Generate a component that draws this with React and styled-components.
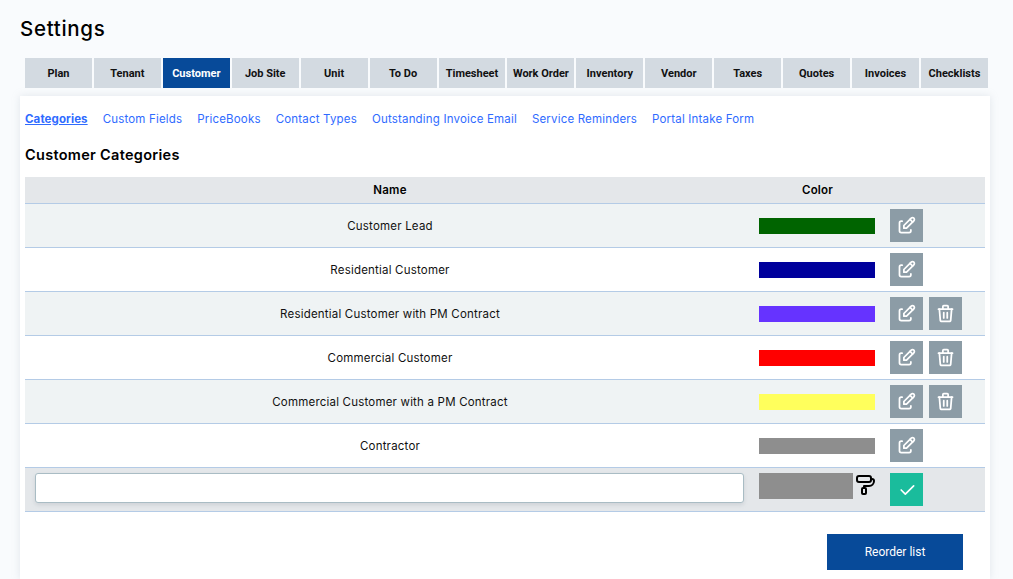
import React from 'react';
import styled, { createGlobalStyle } from 'styled-components';
import { TbEdit, TbTrash, TbCheck, TbPaint } from 'react-icons/tb';

const GlobalStyle = createGlobalStyle`
  html, body {
    margin: 0;
    height: 100%;
    overflow: hidden;
    background: #f9fbfd;
  }
  * {
    box-sizing: border-box;
  }
`;

const Page = styled.div`
  padding: 17px 23px 0 20px;
  font-family: Inter, 'Liberation Sans', sans-serif;
  color: #000;
`;

const Title = styled.h1`
  margin: 0 0 17px;
  height: 24px;
  font-size: 20.5px;
  line-height: 24px;
  font-weight: 500;
  letter-spacing: 0.7px;
`;

const Tabs = styled.div`
  display: flex;
  gap: 2px;
  margin: 0 2px 8px 5px;
`;

const Tab = styled.div`
  flex: 1 1 0;
  height: 30px;
  display: flex;
  align-items: center;
  justify-content: center;
  font-family: Roboto, sans-serif;
  font-size: 11px;
  font-weight: 700;
  white-space: nowrap;
  background: ${(p) => (p.$active ? '#074a99' : '#d3dae1')};
  color: ${(p) => (p.$active ? '#fff' : '#111')};
`;

const Panel = styled.div`
  background: #fff;
  box-shadow: 0 0 8px rgba(160, 170, 185, 0.25);
  padding: 15px 5px 9px;
`;

const SubNav = styled.nav`
  display: flex;
  gap: 15px;
  height: 16px;
  align-items: center;
  margin-bottom: 19px;
`;

const SubLink = styled.a`
  font-size: 11.5px;
  letter-spacing: ${(p) => (p.$active ? '0.1px' : '0.18px')};
  color: #2f6bff;
  font-weight: ${(p) => (p.$active ? 700 : 400)};
  text-decoration: ${(p) => (p.$active ? 'underline' : 'none')};
`;

const Heading = styled.h2`
  margin: 0 0 14px;
  height: 17px;
  font-size: 14.5px;
  line-height: 17px;
  font-weight: 600;
  letter-spacing: 0.3px;
`;

const HeadRow = styled.div`
  display: grid;
  grid-template-columns: 730px 125px 1fr;
  height: 27px;
  align-items: center;
  background: #e4e7ea;
  border-bottom: 1px solid #b4cbe6;
  font-size: 11.5px;
  font-weight: 600;
  letter-spacing: 0.2px;
  text-align: center;
`;

const Row = styled.div`
  display: grid;
  grid-template-columns: 730px 125px 1fr;
  height: 44px;
  align-items: center;
  background: ${(p) => (p.$odd ? '#eff3f4' : '#fff')};
  border-bottom: 1px solid #b4cbe6;
`;

const NameCell = styled.div`
  padding-top: 1px;
  font-size: 11.5px;
  letter-spacing: 0.2px;
  text-align: center;
  color: #111;
`;

const Swatch = styled.div`
  width: 116px;
  height: 16px;
  margin-left: 4px;
  background: ${(p) => p.$color};
`;

const Actions = styled.div`
  display: flex;
  gap: 6px;
  padding-left: 10px;
`;

const IconButton = styled.button`
  width: 33px;
  height: 33px;
  padding: 0;
  border: 0;
  display: flex;
  align-items: center;
  justify-content: center;
  color: #fff;
  font-size: 21px;
  background: ${(p) => (p.$confirm ? '#1abc9c' : '#8c9ca6')};
`;

const AddRow = styled(Row)`
  background: #e4e7ea;
  align-items: start;
  padding-top: 5px;
`;

const InputCell = styled.div`
  padding: 0 11px 0 10px;
`;

const NameInput = styled.input`
  display: block;
  width: 100%;
  height: 30px;
  border: 1px solid #a9bcc4;
  border-radius: 3px;
  background: #fff;
  box-shadow: 0 2px 4px rgba(120, 130, 140, 0.2);
  outline: none;
`;

const Picker = styled.div`
  display: flex;
  align-items: flex-start;
  margin-left: 4px;
`;

const PickerSwatch = styled.div`
  width: 94px;
  height: 26px;
  background: #8e8e8e;
`;

const Roller = styled(TbPaint)`
  flex: none;
  font-size: 24px;
  margin-left: -1px;
  color: #000;
`;

const Footer = styled.div`
  display: flex;
  justify-content: flex-end;
  padding: 22px 22px 0 0;
`;

const ReorderButton = styled.button`
  width: 136px;
  height: 36px;
  border: 0;
  background: #074a99;
  color: #fff;
  font-family: Roboto, sans-serif;
  font-size: 12px;
  font-weight: 400;
`;

const tabs = ['Plan', 'Tenant', 'Customer', 'Job Site', 'Unit', 'To Do', 'Timesheet', 'Work Order', 'Inventory', 'Vendor', 'Taxes', 'Quotes', 'Invoices', 'Checklists'];
const links = ['Categories', 'Custom Fields', 'PriceBooks', 'Contact Types', 'Outstanding Invoice Email', 'Service Reminders', 'Portal Intake Form'];
const categories = [
  { name: 'Customer Lead', color: '#006400' },
  { name: 'Residential Customer', color: '#00009c' },
  { name: 'Residential Customer with PM Contract', color: '#6633ff', removable: true },
  { name: 'Commercial Customer', color: '#ff0000', removable: true },
  { name: 'Commercial Customer with a PM Contract', color: '#ffff5c', removable: true },
  { name: 'Contractor', color: '#8e8e8e' },
];

export default function App() {
  return (
    <>
      <GlobalStyle />
      <Page>
        <Title>Settings</Title>
        <Tabs>
          {tabs.map((t) => (
            <Tab key={t} $active={t === 'Customer'}>{t}</Tab>
          ))}
        </Tabs>
        <Panel>
          <SubNav>
            {links.map((l, i) => (
              <SubLink key={l} $active={i === 0}>{l}</SubLink>
            ))}
          </SubNav>
          <Heading>Customer Categories</Heading>
          <HeadRow>
            <div>Name</div>
            <div>Color</div>
            <div />
          </HeadRow>
          {categories.map((c, i) => (
            <Row key={c.name} $odd={i % 2 === 0}>
              <NameCell>{c.name}</NameCell>
              <Swatch $color={c.color} />
              <Actions>
                <IconButton><TbEdit /></IconButton>
                {c.removable && <IconButton><TbTrash /></IconButton>}
              </Actions>
            </Row>
          ))}
          <AddRow>
            <InputCell><NameInput /></InputCell>
            <Picker>
              <PickerSwatch />
              <Roller />
            </Picker>
            <Actions>
              <IconButton $confirm><TbCheck size={20} /></IconButton>
            </Actions>
          </AddRow>
          <Footer>
            <ReorderButton>Reorder list</ReorderButton>
          </Footer>
        </Panel>
      </Page>
    </>
  );
}
